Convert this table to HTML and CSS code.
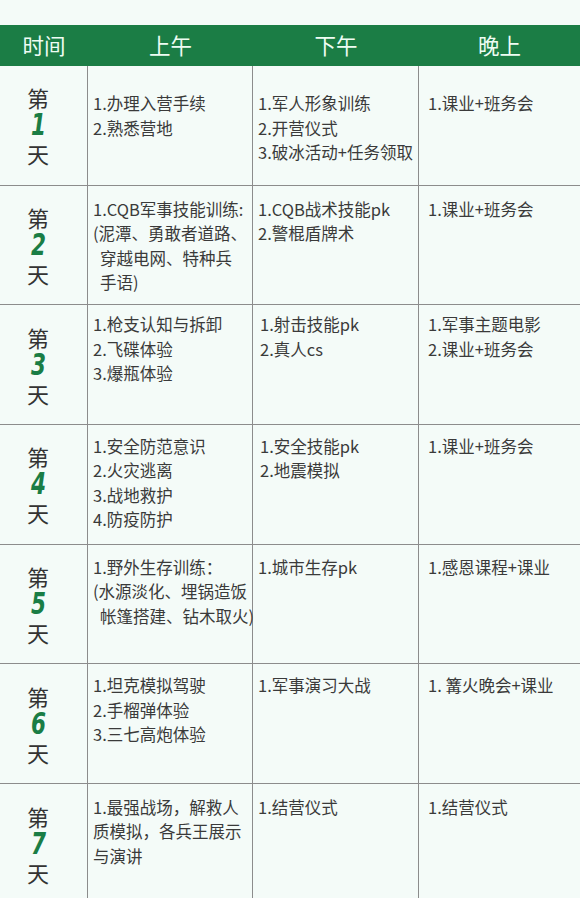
FILE: index.html
```html
<!DOCTYPE html>
<html lang="zh-CN">
<head>
<meta charset="utf-8">
<title>课程安排</title>
<link rel="stylesheet" href="styles.css">
</head>
<body>
<div class="schedule">
  <div class="row head">
    <div class="hc">时间</div>
    <div class="hc">上午</div>
    <div class="hc">下午</div>
    <div class="hc">晚上</div>
  </div>

  <div class="row r1">
    <div class="day"><span class="di">第</span><span class="num">1</span><span class="di">天</span></div>
    <div class="c am"><div>1.办理入营手续</div><div>2.熟悉营地</div></div>
    <div class="c pm"><div>1.军人形象训练</div><div>2.开营仪式</div><div>3.破冰活动+任务领取</div></div>
    <div class="c ev"><div>1.课业+班务会</div></div>
  </div>

  <div class="row r2">
    <div class="day"><span class="di">第</span><span class="num">2</span><span class="di">天</span></div>
    <div class="c am"><div>1.CQB军事技能训练:</div><div>(泥潭、勇敢者道路、</div><div class="ind">穿越电网、特种兵</div><div class="ind">手语)</div></div>
    <div class="c pm"><div>1.CQB战术技能pk</div><div>2.警棍盾牌术</div></div>
    <div class="c ev"><div>1.课业+班务会</div></div>
  </div>

  <div class="row r3">
    <div class="day"><span class="di">第</span><span class="num">3</span><span class="di">天</span></div>
    <div class="c am"><div>1.枪支认知与拆卸</div><div>2.飞碟体验</div><div>3.爆瓶体验</div></div>
    <div class="c pm sp"><div>1.射击技能pk</div><div>2.真人cs</div></div>
    <div class="c ev"><div>1.军事主题电影</div><div>2.课业+班务会</div></div>
  </div>

  <div class="row r4">
    <div class="day"><span class="di">第</span><span class="num">4</span><span class="di">天</span></div>
    <div class="c am"><div>1.安全防范意识</div><div>2.火灾逃离</div><div>3.战地救护</div><div>4.防疫防护</div></div>
    <div class="c pm sp"><div>1.安全技能pk</div><div>2.地震模拟</div></div>
    <div class="c ev"><div>1.课业+班务会</div></div>
  </div>

  <div class="row r5">
    <div class="day"><span class="di">第</span><span class="num">5</span><span class="di">天</span></div>
    <div class="c am"><div>1.野外生存训练：</div><div>(水源淡化、埋锅造饭</div><div class="ind">帐篷搭建、钻木取火)</div></div>
    <div class="c pm"><div>1.城市生存pk</div></div>
    <div class="c ev"><div>1.感恩课程+课业</div></div>
  </div>

  <div class="row r6">
    <div class="day"><span class="di">第</span><span class="num">6</span><span class="di">天</span></div>
    <div class="c am"><div>1.坦克模拟驾驶</div><div>2.手榴弹体验</div><div>3.三七高炮体验</div></div>
    <div class="c pm"><div>1.军事演习大战</div></div>
    <div class="c ev"><div>1. 篝火晚会+课业</div></div>
  </div>

  <div class="row r7">
    <div class="day"><span class="di">第</span><span class="num">7</span><span class="di">天</span></div>
    <div class="c am"><div>1.最强战场，解救人</div><div>质模拟，各兵王展示</div><div>与演讲</div></div>
    <div class="c pm"><div>1.结营仪式</div></div>
    <div class="c ev"><div>1.结营仪式</div></div>
  </div>
</div>
</body>
</html>
```

FILE: styles.css
```css
html, body {
  margin: 0;
  padding: 0;
  background: #f4fbf8;
}

body {
  font-family: "Noto Sans CJK SC", "Noto Sans", sans-serif;
  color: #3a3a3a;
  overflow: hidden;
}

.schedule {
  margin-top: 25px;
  width: 580px;
}

.row {
  display: grid;
  grid-template-columns: 88px 165px 166px 161px;
  height: 119.67px;
  box-sizing: border-box;
  border-bottom: 1px solid #8c8c8c;
}

.row.head {
  height: 41px;
  background: #1b7d45;
  border-bottom: none;
}

.hc {
  display: flex;
  align-items: center;
  justify-content: center;
  color: #eefcf3;
  font-size: 21.5px;
  line-height: 1;
  padding-bottom: 1px;
}

.day,
.c {
  border-right: 1px solid #8c8c8c;
  box-sizing: border-box;
}

.ev {
  border-right: none;
}

.day {
  display: flex;
  flex-direction: column;
  align-items: center;
  justify-content: center;
  padding-right: 11px;
}

.di {
  font-size: 22px;
  line-height: 26px;
  color: #333333;
}

.num {
  display: inline-block;
  font-family: "DejaVu Sans", "Liberation Sans", sans-serif;
  font-stretch: condensed;
  font-weight: 700;
  font-style: italic;
  font-size: 30px;
  line-height: 30px;
  color: #1a7d45;
  transform: scaleX(0.8);
}

.c {
  font-size: 16.5px;
  line-height: 24.5px;
  padding-top: 9px;
  white-space: pre;
  overflow: visible;
}

.am { padding-left: 5px; }
.pm { padding-left: 5px; }
.pm.sp { padding-left: 7px; }
.ev { padding-left: 9px; }

.ind { padding-left: 7px; }

.r1 .c { padding-top: 25px; }
.r2 .c { padding-top: 11px; }
.r3 .c { padding-top: 7px; }
.r4 .c { padding-top: 9px; }
.r5 .c { padding-top: 10px; }
.r6 .c { padding-top: 9px; }
.r7 .c { padding-top: 11px; }
.r7 { border-bottom: none; }
```
